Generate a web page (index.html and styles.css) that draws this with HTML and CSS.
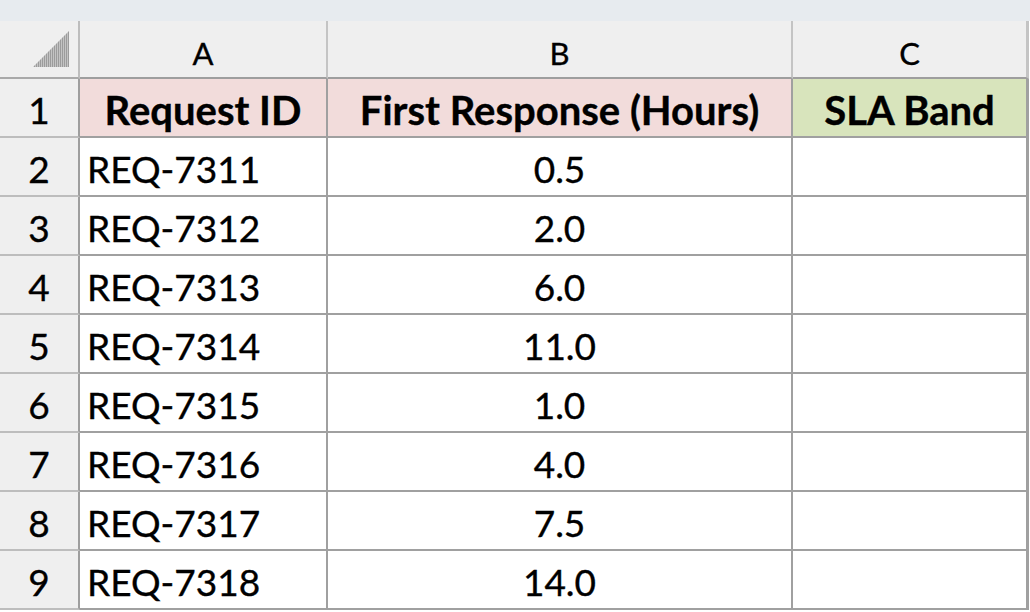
FILE: index.html
```html
<!DOCTYPE html>
<html>
<head>
<meta charset="utf-8">
<link rel="stylesheet" href="styles.css">
</head>
<body>
<div class="topstrip"></div>
<div class="sheet">
  <div class="corner">
    <svg width="78" height="56" viewBox="0 0 78 56">
      <defs>
        <pattern id="st" width="2" height="2" patternUnits="userSpaceOnUse">
          <rect width="1" height="2" fill="#9c9c9c"/>
          <rect x="1" width="1" height="2" fill="#c4c4c4"/>
        </pattern>
      </defs>
      <polygon points="33,46 69,10 69,46" fill="url(#st)"/>
    </svg>
  </div>
  <div class="colhead">A</div>
  <div class="colhead">B</div>
  <div class="colhead last">C</div>

  <div class="rowhead">1</div>
  <div class="cell hdr pink">Request ID</div>
  <div class="cell hdr pink center">First Response (Hours)</div>
  <div class="cell hdr green center last">SLA Band</div>

  <div class="rowhead">2</div>
  <div class="cell">REQ-7311</div>
  <div class="cell center">0.5</div>
  <div class="cell last"></div>

  <div class="rowhead">3</div>
  <div class="cell">REQ-7312</div>
  <div class="cell center">2.0</div>
  <div class="cell last"></div>

  <div class="rowhead">4</div>
  <div class="cell">REQ-7313</div>
  <div class="cell center">6.0</div>
  <div class="cell last"></div>

  <div class="rowhead">5</div>
  <div class="cell">REQ-7314</div>
  <div class="cell center">11.0</div>
  <div class="cell last"></div>

  <div class="rowhead">6</div>
  <div class="cell">REQ-7315</div>
  <div class="cell center">1.0</div>
  <div class="cell last"></div>

  <div class="rowhead">7</div>
  <div class="cell">REQ-7316</div>
  <div class="cell center">4.0</div>
  <div class="cell last"></div>

  <div class="rowhead">8</div>
  <div class="cell">REQ-7317</div>
  <div class="cell center">7.5</div>
  <div class="cell last"></div>

  <div class="rowhead">9</div>
  <div class="cell">REQ-7318</div>
  <div class="cell center">14.0</div>
  <div class="cell last"></div>
</div>
</body>
</html>
```

FILE: styles.css
```css
html, body {
  margin: 0;
  padding: 0;
  background: #ffffff;
  overflow: hidden;
}
body {
  font-family: Lato, "Open Sans", sans-serif;
  color: #000;
  -webkit-text-stroke: 0.35px #000;
}
.topstrip {
  height: 21px;
  background: #e7ebef;
}
.sheet {
  display: grid;
  grid-template-columns: 80px 248px 465px 236px;
  grid-template-rows: 58px repeat(9, 59px);
}
.corner {
  background: #efefef;
  border-right: 2px solid #bdbdbd;
  border-bottom: 2px solid #a9a9a9;
}
.corner svg {
  display: block;
}
.colhead {
  background: #efefef;
  border-right: 2px solid #c4c4c4;
  border-bottom: 2px solid #9e9e9e;
  display: flex;
  align-items: center;
  justify-content: center;
  font-size: 31px;
  padding-top: 8px;
  box-sizing: border-box;
}
.rowhead {
  background: #efefef;
  border-right: 2px solid #9e9e9e;
  border-bottom: 2px solid #bdbdbd;
  display: flex;
  align-items: center;
  justify-content: center;
  font-size: 37px;
  padding-top: 4px;
  box-sizing: border-box;
}
.cell {
  border-right: 2px solid #a0a0a0;
  border-bottom: 2px solid #a0a0a0;
  display: flex;
  align-items: center;
  font-size: 37px;
  padding: 4px 0 0 7px;
  box-sizing: border-box;
  white-space: nowrap;
}
.cell.center {
  justify-content: center;
  padding-left: 0;
}
.cell.hdr {
  font-weight: bold;
  font-size: 40px;
  justify-content: center;
  padding-left: 0;
}
.pink {
  background: #f2dcdb;
}
.green {
  background: #d8e4bc;
}
.last {
  border-right-width: 3px;
}
```
